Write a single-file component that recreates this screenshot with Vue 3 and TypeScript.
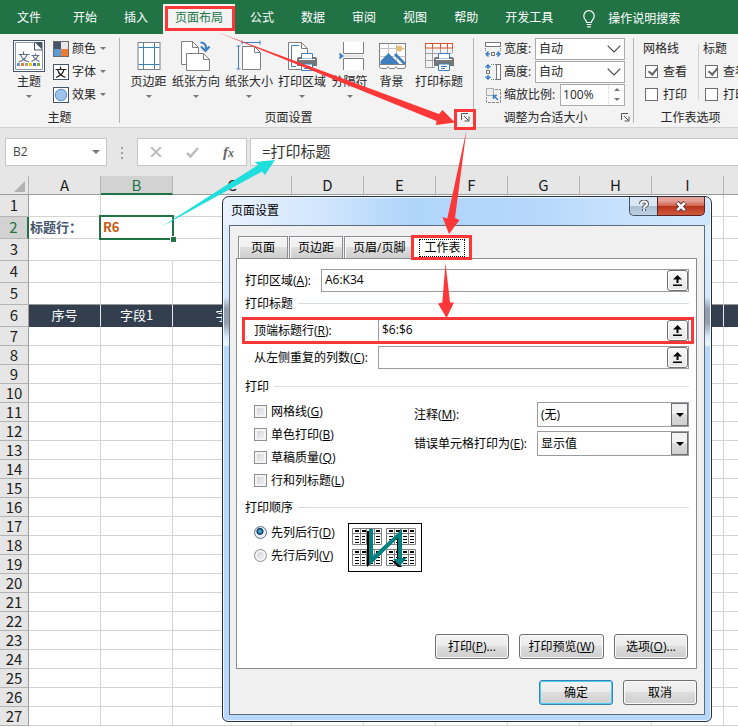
<script setup lang="ts">
import { ref } from 'vue'

interface SheetRow {
  n: number
  tall: boolean
}

const menuTabs = ['开始', '插入', '页面布局', '公式', '数据', '审阅', '视图', '帮助', '开发工具']
const activeMenu = ref('页面布局')

const columns = ['A', 'B', 'C', 'D', 'E', 'F', 'G', 'H', 'I', '']
const rows: SheetRow[] = Array.from({ length: 27 }, (_, i) => ({ n: i + 1, tall: i < 6 }))
const fieldNames: Record<string, string> = { A: '序号', B: '字段1', C: '字段2' }

const pageTools = [
  { id: 'margins', label: '页边距', menu: true },
  { id: 'orient', label: '纸张方向', menu: true },
  { id: 'size', label: '纸张大小', menu: true },
  { id: 'area', label: '打印区域', menu: true },
  { id: 'breaks', label: '分隔符', menu: true },
  { id: 'background', label: '背景', menu: false },
  { id: 'titles', label: '打印标题', menu: false },
]

const sheetOptions = ref([
  { title: '网格线', view: true, print: false },
  { title: '标题', view: true, print: false },
])

const dialogTabs = ['页面', '页边距', '页眉/页脚', '工作表']
const activeTab = ref('工作表')

const formula = ref('=打印标题')
const scaleWidth = ref('自动')
const scaleHeight = ref('自动')
const zoom = ref('100%')
const printArea = ref('A6:K34')
const titleRows = ref('$6:$6')
const titleCols = ref('')
const comments = ref('(无)')
const errorsAs = ref('显示值')
const order = ref('D')

const printFlags = ref([
  { label: '网格线', key: 'G', on: false },
  { label: '单色打印', key: 'B', on: false },
  { label: '草稿质量', key: 'Q', on: false },
  { label: '行和列标题', key: 'L', on: false },
])
const orders = [
  { label: '先列后行', key: 'D' },
  { label: '先行后列', key: 'V' },
]
const panelActions = [
  { label: '打印', key: 'P', more: true },
  { label: '打印预览', key: 'W', more: false },
  { label: '选项', key: 'O', more: true },
]
const miniPages = [[4, 5], [38, 5], [4, 26], [38, 26]]
</script>

<template>
  <div class="app">
    <nav class="menu">
      <button class="menu-tab file">文件</button>
      <button
        v-for="t in menuTabs"
        :key="t"
        class="menu-tab"
        :class="{ active: t === activeMenu }"
        @click="activeMenu = t"
      >{{ t }}</button>
      <button class="tell-me">
        <svg width="12" height="18" viewBox="0 0 12 18" fill="none" stroke="#fff" stroke-width="1.2">
          <path d="M3.7 12.5c0-2.200-2.900-3-2.900-6.600a5.200 5.200 0 0 1 10.400 0c0 3.600-2.900 4.400-2.900 6.600z" />
          <path d="M3.700 14.500h4.600M4.200 16.800h3.600" />
        </svg>
        <span>操作说明搜索</span>
      </button>
    </nav>

    <section class="ribbon">
      <div class="group theme">
        <div class="group-body">
          <button class="big">
            <svg width="32" height="32" viewBox="0 0 32 32">
              <rect x=".5" y=".5" width="31" height="31" fill="#fff" stroke="#44546a" />
              <path d="M2.500 2.500h19.500l7.500 7.500v19.500h-27z" fill="#fff" stroke="#8a98ac" />
              <path d="M21.500 2h8v8z" fill="#44546a" />
              <path d="M21.500 2.500v7.500h8" fill="#fff" stroke="#44546a" />
              <g fill="none" stroke="#60718a" stroke-width="1.100">
                <path d="M10.500 11.500v3M5.500 14.500h11M7.500 14.500c1 3.500 3.500 6 8.500 7.500M14 14.500c-1 3.500-3.500 6-8.500 7.500" />
                <path d="M22.500 13.500v2M18.500 15.500h8M20 15.500c1 3 3 4.500 6.500 6M25 15.500c-1 3-3 4.500-6.500 6" />
              </g>
              <path d="M4 23h3v3H4z" fill="#5b9bd5" /><path d="M8 23h3v3H8z" fill="#ed7d31" />
              <path d="M12 23h3v3h-3z" fill="#a5a5a5" /><path d="M16 23h3v3h-3z" fill="#ffc000" />
              <path d="M20 23h3v3h-3z" fill="#4472c4" /><path d="M24 23h3v3h-3z" fill="#70ad47" />
            </svg>
            <span>主题</span>
            <i class="caret"></i>
          </button>
          <div class="stack">
            <button class="small">
              <svg width="16" height="16" viewBox="0 0 16 16">
                <path d="M0 0h8v8H0z" fill="#44546a" /><path d="M8 0h8v8H8z" fill="#e7e6e6" />
                <path d="M0 8h8v8H0z" fill="#5b9bd5" /><path d="M8 8h8v8H8z" fill="#ed7d31" />
                <rect x=".5" y=".5" width="15" height="15" fill="none" stroke="#6c6c6c" />
              </svg>
              <span>颜色</span><i class="caret"></i>
            </button>
            <button class="small">
              <svg width="16" height="16" viewBox="0 0 16 16">
                <rect x=".5" y=".5" width="15" height="15" fill="#fff" stroke="#44546a" />
                <path d="M7.500 2.500v2.500M2.500 5.500h11M4.500 5.500c1 3.500 3.500 6.500 8 8M11 5.500c-1 3.500-3.500 6.500-8 8" fill="none" stroke="#222" stroke-width="1.200" />
              </svg>
              <span>字体</span><i class="caret"></i>
            </button>
            <button class="small">
              <svg width="16" height="16" viewBox="0 0 16 16">
                <rect x=".5" y=".5" width="15" height="15" fill="#fff" stroke="#44546a" />
                <circle cx="8" cy="8" r="5.700" fill="#9dc3ee" stroke="#5b8fcb" />
              </svg>
              <span>效果</span><i class="caret"></i>
            </button>
          </div>
        </div>
        <div class="group-foot"><span>主题</span></div>
      </div>
      <div class="divider"></div>

      <div class="group page">
        <div class="group-body tools">
          <button v-for="t in pageTools" :key="t.id" class="big">
            <svg width="32" height="32" viewBox="0 0 32 32" fill="none">
              <template v-if="t.id === 'margins'">
                <rect x="5" y="2.500" width="22" height="27" fill="#fff" stroke="#7f7f7f" />
                <path d="M10.500 3v26M21.500 3v26M5.500 7.500h21M5.500 24.500h21" stroke="#3f7fbf" />
              </template>
              <template v-else-if="t.id === 'orient'">
                <path d="M1.500 1.500h11l6 6v17h-17z" fill="#fff" stroke="#7f7f7f" />
                <path d="M12.500 1.500v6h6" stroke="#7f7f7f" />
                <path d="M6.500 13.500h17l6 6v11h-23z" fill="#fff" stroke="#7f7f7f" />
                <path d="M23.500 13.500v6h6" stroke="#7f7f7f" />
                <path d="M20.500 2.500c4 0 6 2.500 5.500 7" stroke="#3f7fbf" stroke-width="2.200" />
                <path d="M21 6.500l4.500 4.500 4-4.500" stroke="#3f7fbf" stroke-width="2.200" />
              </template>
              <template v-else-if="t.id === 'size'">
                <path d="M9 2.500h18M9 .5v4M27 .5v4M5.500 6v23M3.500 6h4M3.500 29h4" stroke="#3f7fbf" />
                <path d="M9.500 6.500h12l6 6v17h-18z" fill="#fff" stroke="#7f7f7f" />
                <path d="M21.500 6.500v6h6" stroke="#7f7f7f" />
              </template>
              <template v-else-if="t.id === 'area'">
                <path d="M2.500 2.500h13l6 6v21h-19z" fill="#fff" stroke="#7f7f7f" />
                <path d="M15.500 2.500v6h6" stroke="#7f7f7f" />
                <path d="M13 5.500H5.500v21H10" stroke="#3f7fbf" />
              </template>
              <template v-else-if="t.id === 'breaks'">
                <path d="M9.500 2v11.500h20V2M9.500 30V18.500h20V30" fill="#fff" stroke="#7f7f7f" />
                <path d="M5.500 12.500l4.500 3.500-4.500 3.500z" fill="#3f7fbf" />
                <path d="M10 16h20" stroke="#d8d8d8" />
              </template>
              <template v-else-if="t.id === 'background'">
                <rect x="3.500" y="3.500" width="26" height="21" fill="#fff" stroke="#7f7f7f" />
                <path d="M3.500 8.500h26M12.500 3.500v21M20.500 3.500v21M3.500 16.500h26" stroke="#c4c4c4" />
                <circle cx="23.500" cy="8.500" r="3" fill="#e8bd74" />
                <path d="M4.500 24v-3l8-8 11 11zM18 15l2-2 9 9v2h-2z" fill="#3f7fbf" />
                <path d="M3.500 24.500v2q0 2 2 2h5l1.500-2 1.500 2h5l1.500-2 1.500 2h6q2 0 2-2v-2z" fill="#fff" stroke="#7f7f7f" />
              </template>
              <template v-else>
                <path d="M2.500 7v20.500H12M2.500 13.500h26M2.500 20.500h10M9.500 7v20M17.500 7v6M24.500 7v6M29.500 7v6" stroke="#a0a0a0" />
                <rect x="2.500" y="3.500" width="27" height="4.500" fill="#fff" stroke="#d9542b" />
                <path d="M9.500 4v4M17.500 4v4M24.500 4v4" stroke="#d9542b" />
              </template>
              <g v-if="t.id === 'area' || t.id === 'titles'">
                <path d="M11 19q0-2 2-2h16q2 0 2 2v7H11z" fill="#777" />
                <path d="M15.500 19v-5.500h11V19z" fill="#fff" stroke="#3f7fbf" />
                <path d="M13 19.500h16" stroke="#fff" />
                <path d="M15.500 24h11v6.500h-11z" fill="#fff" stroke="#3f7fbf" />
                <path d="M18 26.500h6M18 28.500h4" stroke="#3f7fbf" />
              </g>
            </svg>
            <span>{{ t.label }}</span>
            <i v-if="t.menu" class="caret"></i>
          </button>
        </div>
        <div class="group-foot">
          <span>页面设置</span>
          <button class="launcher" aria-label="页面设置">
            <svg width="9" height="9" viewBox="0 0 9 9" fill="none" stroke="#555"><path d="M.5 7V.5H7M3 3l4.500 4.500M8 3.500v4.500H3.500" /></svg>
          </button>
        </div>
      </div>
      <div class="divider"></div>

      <div class="group scale">
        <div class="group-body stack">
          <div class="scale-row">
            <svg width="16" height="16" viewBox="0 0 16 16" fill="none">
              <rect x=".5" y="1.500" width="15" height="4" fill="#fff" stroke="#777" />
              <path d="M.5 7v3M15.500 7v3" stroke="#777" stroke-dasharray="1 1" />
              <rect x="6.500" y="11.500" width="3" height="3" stroke="#777" />
              <path d="M1 13h4M11 13h4M3.500 10.500L1 13l2.500 2.500M12.500 10.500L15 13l-2.500 2.500" stroke="#3f7fbf" stroke-width="1.500" />
            </svg>
            <label for="sw">宽度:</label>
            <div class="combo">
              <select id="sw" v-model="scaleWidth"><option>自动</option></select>
              <svg width="14" height="8" viewBox="0 0 14 8" fill="none" stroke="#444" stroke-width="1.100"><path d="M.7.7L7 7 13.300.7" /></svg>
            </div>
          </div>
          <div class="scale-row">
            <svg width="16" height="16" viewBox="0 0 16 16" fill="none">
              <rect x="11.500" y=".5" width="4" height="15" fill="#fff" stroke="#777" />
              <path d="M6 .5h5M6 15.500h5" stroke="#777" stroke-dasharray="1 1" />
              <rect x="1.500" y="6.500" width="3" height="3" stroke="#777" />
              <path d="M3 1v4M3 11v4M.5 3.500L3 1l2.500 2.500M.5 12.500L3 15l2.500-2.500" stroke="#3f7fbf" stroke-width="1.500" />
            </svg>
            <label for="sh">高度:</label>
            <div class="combo">
              <select id="sh" v-model="scaleHeight"><option>自动</option></select>
              <svg width="14" height="8" viewBox="0 0 14 8" fill="none" stroke="#444" stroke-width="1.100"><path d="M.7.7L7 7 13.300.7" /></svg>
            </div>
          </div>
          <div class="scale-row">
            <svg width="16" height="16" viewBox="0 0 16 16" fill="none">
              <rect x="1.500" y="1.500" width="7" height="7" fill="#eee" stroke="#666" stroke-dasharray="1 1" />
              <path d="M10 2.500h5.500v13H1.500V10" stroke="#888" stroke-dasharray="3 1" />
              <path d="M8.500 12V8.500H12M8.500 8.500l4.500 4.500" stroke="#3f7fbf" stroke-width="1.500" />
            </svg>
            <label for="sz">缩放比例:</label>
            <div class="spinner">
              <input id="sz" v-model="zoom" />
              <div class="spin-btns">
                <button aria-label="增大"><i class="up"></i></button>
                <button aria-label="减小"><i class="caret"></i></button>
              </div>
            </div>
          </div>
        </div>
        <div class="group-foot">
          <span>调整为合适大小</span>
          <button class="launcher" aria-label="调整为合适大小">
            <svg width="9" height="9" viewBox="0 0 9 9" fill="none" stroke="#555"><path d="M.5 7V.5H7M3 3l4.500 4.500M8 3.500v4.500H3.500" /></svg>
          </button>
        </div>
      </div>
      <div class="divider"></div>

      <div class="group options">
        <div class="group-body">
          <template v-for="(o, i) in sheetOptions" :key="o.title">
            <div v-if="i > 0" class="inner-divider"></div>
            <div class="stack">
              <span class="opt-title">{{ o.title }}</span>
              <label class="opt"><input v-model="o.view" type="checkbox" />查看</label>
              <label class="opt"><input v-model="o.print" type="checkbox" />打印</label>
            </div>
          </template>
        </div>
        <div class="group-foot"><span>工作表选项</span></div>
      </div>
    </section>

    <section class="formula-bar">
      <button class="name-box"><span>B2</span><i class="caret dark"></i></button>
      <svg class="dots" width="3" height="13" viewBox="0 0 3 13" fill="#a0a0a0"><path d="M0 1h2v2H0zM0 6h2v2H0zM0 11h2v2H0z" /></svg>
      <div class="fx-box">
        <button aria-label="取消输入"><svg width="12" height="10" viewBox="0 0 12 10" fill="none" stroke="#bdbdbd" stroke-width="2"><path d="M1 0l10 10M11 0L1 10" /></svg></button>
        <button aria-label="输入"><svg width="13" height="11" viewBox="0 0 13 11" fill="none" stroke="#bdbdbd" stroke-width="2.500"><path d="M1 6l3.500 3.500L12 1" /></svg></button>
        <button aria-label="插入函数" class="fx">f<small>x</small></button>
      </div>
      <input v-model="formula" class="formula" aria-label="编辑栏" />
    </section>

    <main class="sheet">
      <table>
        <colgroup>
          <col class="c-head" />
          <col v-for="(c, i) in columns" :key="i" :class="c === 'C' ? 'c-wide' : c ? 'c-std' : ''" />
        </colgroup>
        <thead>
          <tr>
            <th class="corner"><svg width="11" height="11" viewBox="0 0 11 11"><path d="M11 0v11H0z" fill="#b2b2b2" /></svg></th>
            <th v-for="(c, i) in columns" :key="i" :class="{ sel: c === 'B' }">{{ c }}</th>
          </tr>
        </thead>
        <tbody>
          <tr v-for="r in rows" :key="r.n" :class="{ tall: r.tall, fields: r.n === 6, before: r.n === 5 }">
            <th :class="{ sel: r.n === 2 }">{{ r.n }}</th>
            <td v-for="(c, i) in columns" :key="i" :class="{ open: c === 'B' && r.n < 4, cell: c === 'B' && r.n === 2, lead: c === 'A' && r.n === 2 }">
              <template v-if="r.n === 6">{{ fieldNames[c] }}</template>
              <template v-else-if="r.n === 2 && c === 'A'">标题行：</template>
              <template v-else-if="r.n === 2 && c === 'B'">R6<span class="selection"><i></i></span></template>
            </td>
          </tr>
        </tbody>
      </table>
    </main>

    <div class="dialog" role="dialog" aria-label="页面设置">
      <header class="title-bar">
        <span>页面设置</span>
        <div class="win-btns">
          <button class="help" aria-label="帮助">
            <svg width="10" height="12" viewBox="0 0 10 12" fill="none"><g stroke="#4a5262" stroke-width="4"><path d="M2 4q0-2.500 3-2.500T8 4q0 1.300-1.500 2T5 8" /><path d="M5 9v2" /></g><g stroke="#fff" stroke-width="2"><path d="M2 4q0-2.500 3-2.500T8 4q0 1.300-1.500 2T5 8" /><path d="M5 9.200v1.800" /></g></svg>
          </button>
          <button class="close" aria-label="关闭">
            <svg width="12" height="11" viewBox="0 0 12 11" fill="none"><path d="M2 1.500l8 8M10 1.500l-8 8" stroke="#5a3a3e" stroke-width="4.500" /><path d="M2.300 1.800l7.400 7.400M9.700 1.800L2.300 9.200" stroke="#fff" stroke-width="2.600" /></svg>
          </button>
        </div>
      </header>
      <div class="dialog-body">
        <div class="tabs" role="tablist">
          <button
            v-for="t in dialogTabs"
            :key="t"
            role="tab"
            class="tab"
            :class="{ current: t === activeTab }"
            @click="activeTab = t"
          ><span>{{ t }}</span></button>
        </div>
        <div class="panel">
          <div class="field area-row">
            <label for="pa">打印区域(<u>A</u>):</label>
            <div class="ref-box">
              <input id="pa" v-model="printArea" />
              <button aria-label="选择区域"><svg width="9" height="11" viewBox="0 0 9 11"><path d="M4.500 0L9 4.500H5.500V8h-2V4.500H0zM0 9.500h9V11H0z" /></svg></button>
            </div>
          </div>

          <section>
            <h3>打印标题</h3>
            <div class="titles-body">
              <div class="field title-row">
                <label for="tr">顶端标题行(<u>R</u>):</label>
                <div class="ref-box">
                  <input id="tr" v-model="titleRows" />
                  <button aria-label="选择标题行"><svg width="9" height="11" viewBox="0 0 9 11"><path d="M4.500 0L9 4.500H5.500V8h-2V4.500H0zM0 9.500h9V11H0z" /></svg></button>
                </div>
              </div>
              <div class="field title-row">
                <label for="tc">从左侧重复的列数(<u>C</u>):</label>
                <div class="ref-box">
                  <input id="tc" v-model="titleCols" />
                  <button aria-label="选择标题列"><svg width="9" height="11" viewBox="0 0 9 11"><path d="M4.500 0L9 4.500H5.500V8h-2V4.500H0zM0 9.500h9V11H0z" /></svg></button>
                </div>
              </div>
            </div>
          </section>

          <section class="print">
            <h3>打印</h3>
            <div class="print-body">
              <div class="choices">
                <label v-for="f in printFlags" :key="f.key" class="choice">
                  <input v-model="f.on" type="checkbox" /><span>{{ f.label }}(<u>{{ f.key }}</u>)</span>
                </label>
              </div>
              <div class="selects">
                <label for="cm">注释(<u>M</u>):</label>
                <div class="drop">
                  <select id="cm" v-model="comments"><option>(无)</option></select>
                  <span class="drop-btn"><i></i></span>
                </div>
                <label for="er">错误单元格打印为(<u>E</u>):</label>
                <div class="drop">
                  <select id="er" v-model="errorsAs"><option>显示值</option></select>
                  <span class="drop-btn"><i></i></span>
                </div>
              </div>
            </div>
          </section>

          <section class="order">
            <h3>打印顺序</h3>
            <div class="print-body">
              <div class="choices">
                <label v-for="o in orders" :key="o.key" class="choice">
                  <input v-model="order" type="radio" name="order" :value="o.key" /><span>{{ o.label }}(<u>{{ o.key }}</u>)</span>
                </label>
              </div>
              <svg class="preview" width="74" height="49" viewBox="0 0 74 49" fill="none">
                <rect x=".5" y=".5" width="73" height="48" fill="#fff" stroke="#000" />
                <g v-for="([x, y], i) in miniPages" :key="i" :transform="`translate(${x} ${y})`">
                  <path d="M.5.5h29v16H.5zM.5 5.500h29M8.500.5v16M14.500.5v16M22.500.5v16" stroke="#808080" />
                  <path d="M3 3h4M10 3h4M17 3h4M24 3h4" stroke="#000" stroke-width="2" />
                  <path d="M3 8.500h4M3 11.500h4M3 14.500h4M10 8.500h3M10 11.500h3M10 14.500h3M17 8.500h4M17 11.500h4M17 14.500h4M24 8.500h4M24 11.500h4M24 14.500h4" stroke="#000" />
                </g>
                <path d="M19 8h3v33l-3 3zM49 13h3v27h-3zM44 38h5l5 6h-4z" fill="#000" />
                <path d="M21 6h4v27L54 6v29h4.500L52 43l-7-7h5V15L22 42h-1z" fill="#008080" />
              </svg>
            </div>
          </section>

          <div class="actions">
            <button v-for="a in panelActions" :key="a.key" class="btn" :class="{ wide: !a.more }">
              {{ a.label }}(<u>{{ a.key }}</u>)<template v-if="a.more">...</template>
            </button>
          </div>
        </div>
        <footer class="dialog-foot">
          <button class="btn primary">确定</button>
          <button class="btn">取消</button>
        </footer>
      </div>
    </div>

    <svg class="notes" width="738" height="727" viewBox="0 0 738 727" fill="none">
      <path d="M161 227L258 165l-3-3 20-2-10 15-3-3.500z" fill="#1fdede" />
      <g stroke="#fc3737" stroke-width="3">
        <rect x="166.500" y="7.500" width="67" height="22" />
        <rect x="455.500" y="110.500" width="19" height="18" />
        <rect x="412.500" y="236.500" width="58" height="22" />
        <rect x="243.500" y="318.500" width="449" height="24" />
      </g>
      <g fill="#fc3737">
        <path d="M217 32l222 82 3.500-4 12.500 12.500-19 2.500.5-4z" />
        <path d="M466.500 130L455 218l4.500 2-10.500 14-6.500-17 4.800 1.500z" />
        <path d="M445.500 263l4.500 39.500h4L446.500 318 438 303.500l4.300-1z" />
      </g>
    </svg>
  </div>
</template>

<style>
body {
  margin: 0;
}
</style>

<style scoped>
.app {
  position: relative;
  display: flex;
  flex-direction: column;
  height: 100vh;
  overflow: hidden;
  background: #e6e6e6;
  font: 12px/16px "Open Sans", "Noto Sans CJK SC", sans-serif;
  color: #262626;
}
.app * {
  box-sizing: border-box;
}
button,
input,
select {
  margin: 0;
  padding: 0;
  border: 0;
  background: none;
  font: inherit;
  color: inherit;
  appearance: none;
  outline: none;
  border-radius: 0;
}
svg {
  display: block;
  flex: none;
}
.caret {
  width: 0;
  height: 0;
  border: 3px solid transparent;
  border-top-color: #777;
  border-bottom: 0;
}
.up {
  width: 0;
  height: 0;
  border: 3px solid transparent;
  border-bottom-color: #777;
  border-top: 0;
}

/* menu strip */
.menu {
  display: flex;
  flex: none;
  gap: 3px;
  height: 34px;
  padding: 4px 0 0 5px;
  background: #217346;
  color: #fff;
  white-space: nowrap;
}
.menu-tab {
  flex: none;
  padding: 0 12px 2px;
}
.menu-tab.file {
  margin-right: 5px;
}
.menu-tab.active {
  background: #f3f3f3;
  color: #217346;
}
.tell-me {
  display: flex;
  align-items: center;
  gap: 13px;
  margin-left: 15px;
}

/* ribbon */
.ribbon {
  display: flex;
  flex: none;
  overflow: hidden;
  background: #f3f3f3;
  border-bottom: 1px solid #d2d2d2;
  white-space: nowrap;
}
.divider {
  flex: none;
  width: 1px;
  margin: 4px 0;
  background: #b4b4b4;
}
.group {
  flex: none;
  padding-top: 3px;
}
.group-body {
  display: flex;
  height: 69px;
}
.theme .group-body {
  gap: 8px;
  padding: 0 13px;
}
.page .group-body {
  gap: 5px;
  padding: 0 10px;
}
.scale .group-body {
  padding: 0 8px 0 11px;
}
.options .group-body {
  padding: 0 0 0 9px;
}
.group-foot {
  display: flex;
  height: 21px;
  line-height: 23px;
}
.group-foot span {
  flex: 1;
  text-align: center;
}
.launcher {
  display: flex;
  align-items: center;
  justify-content: center;
  width: 16px;
  padding-top: 2px;
}
.big {
  display: flex;
  flex-direction: column;
  align-items: center;
  gap: 2px;
  padding-top: 3px;
}
.tools .big {
  min-width: 37px;
}
.big .caret {
  margin-top: 3px;
}
.stack {
  display: flex;
  flex-direction: column;
}
.small {
  display: flex;
  align-items: center;
  height: 23px;
}
.small span {
  padding: 0 4px 0 3px;
}
.scale-row {
  display: flex;
  align-items: center;
  gap: 3px;
  width: 140px;
  height: 23px;
}
.combo {
  display: flex;
  align-items: center;
  width: 90px;
  height: 22px;
  margin-left: auto;
  padding-right: 3px;
  border: 1px solid #ababab;
  background: #fff;
}
.combo select {
  flex: 1;
  min-width: 0;
  padding-left: 3px;
}
.spinner {
  display: flex;
  width: 65px;
  height: 22px;
  margin-left: auto;
  border: 1px solid #ababab;
  background: #fff;
}
.spinner input {
  flex: 1;
  min-width: 0;
  padding-left: 2px;
}
.spin-btns {
  display: flex;
  flex-direction: column;
  width: 16px;
  border-left: 1px solid #e6e6e6;
}
.spin-btns button {
  display: flex;
  flex: 1;
  align-items: center;
  justify-content: center;
}
.opt-title {
  line-height: 23px;
}
.opt {
  display: flex;
  align-items: center;
  gap: 5px;
  height: 23px;
  padding-left: 2px;
}
.opt input {
  width: 13px;
  height: 13px;
  border: 1px solid #6e6e6e;
  background: #fff;
}
.opt input:checked::after {
  content: "";
  display: block;
  width: 4px;
  height: 7px;
  margin: 0 0 0 4px;
  border: solid #666;
  border-width: 0 2px 2px 0;
  transform: rotate(40deg);
}
.inner-divider {
  width: 1px;
  margin: 7px 4px 7px 11px;
  background: #d0d0d0;
}

/* formula bar */
.formula-bar {
  display: flex;
  flex: none;
  height: 48px;
  padding: 10px 0 10px 5px;
}
.name-box {
  display: flex;
  align-items: center;
  justify-content: space-between;
  width: 102px;
  padding: 0 6px 0 7px;
  border: 1px solid #c6c6c6;
  background: #fff;
  color: #444;
}
.caret.dark {
  border-width: 4px 4px 0;
}
.dots {
  align-self: center;
  margin: 0 13px 0 14px;
}
.fx-box {
  display: flex;
  align-items: center;
  justify-content: space-around;
  width: 110px;
  border: 1px solid #c6c6c6;
  background: #fff;
}
.fx {
  font: italic 15px/20px "Liberation Serif", serif;
  font-weight: bold;
  color: #666;
}
.fx small {
  font-size: 12px;
}
.formula {
  flex: 1;
  min-width: 0;
  margin-left: 3px;
  padding: 0 11px 2px;
  border: 1px solid #c6c6c6;
  border-right: 0;
  background: #fff;
  font-size: 15px;
  color: #333;
}

/* sheet */
.sheet {
  flex: 1;
  min-height: 0;
  overflow: hidden;
  background: #fff;
}
table {
  width: 100%;
  table-layout: fixed;
  border-collapse: separate;
  border-spacing: 0;
  font: 15px/18px "Noto Sans CJK SC", sans-serif;
}
.c-head {
  width: 29px;
}
.c-std {
  width: 72px;
}
.c-wide {
  width: 119px;
}
th,
td {
  padding: 0;
  height: 19px;
  white-space: nowrap;
}
th {
  background: #e6e6e6;
  font-weight: normal;
  color: #1e1e1e;
}
thead th {
  border-right: 1px solid #b4b4b4;
  border-bottom: 1px solid #9b9b9b;
}
thead th:last-child {
  border-right: 0;
}
thead th.sel {
  border-bottom: 2px solid #217346;
  background: #d2d2d2;
  color: #217346;
  line-height: 17px;
}
.corner svg {
  margin: 2px 0 0 14px;
}
tbody th {
  border-right: 1px solid #9b9b9b;
  border-bottom: 1px solid #b4b4b4;
}
tbody th.sel {
  border-right: 2px solid #217346;
  background: #d2d2d2;
  color: #217346;
}
td {
  border-right: 1px solid #d4d4d4;
  border-bottom: 1px solid #d4d4d4;
}
td:last-child {
  border-right: 0;
}
.tall th,
.tall td {
  height: 22px;
  padding-bottom: 2px;
}
.tall td {
  font-size: 13px;
}
.before td {
  border-bottom-color: #999;
}
td.open {
  border-right-color: #fff;
}
.lead {
  padding-left: 1px;
  font-weight: bold;
  color: #44546a;
}
.cell {
  position: relative;
  padding-left: 2px;
  font-weight: bold;
  color: #c55a11;
}
.selection {
  position: absolute;
  inset: -2px;
  border: 2px solid #217346;
}
.selection i {
  position: absolute;
  right: -4px;
  bottom: -4px;
  width: 6px;
  height: 6px;
  border: solid #fff;
  border-width: 1px 0 0 1px;
  background: #217346;
}
.fields td {
  border-right-color: #e8e8e8;
  border-bottom-color: #333f4f;
  background: #333f4f;
  color: #fff;
  text-align: center;
}

/* page setup dialog */
.dialog {
  position: absolute;
  left: 222px;
  top: 196px;
  width: 490px;
  padding: 0 6px 6px;
  border: 1px solid #26303c;
  border-radius: 7px 7px 6px 6px;
  background:
    linear-gradient(90deg, #e9f3fe 0, #cfe4fc 22%, #b0d5fb 38%, #b4d7fb 62%, #cde4fd 88%, #cfe6fe) 0 0 / 100% 28px no-repeat,
    linear-gradient(#e2f0fe 0, #d4e8fd 100px, #939fac 112px, #939fac 126px, #dcecfd 140px, #eaf4fe 148px, #b7d8fb 150px);
  box-shadow: inset 0 0 0 1px #eef7ff;
  color: #000;
}
.title-bar {
  display: flex;
  justify-content: space-between;
  height: 28px;
  padding-left: 2px;
  line-height: 27px;
}
.win-btns {
  display: flex;
  height: 19px;
}
.win-btns button {
  display: flex;
  align-items: center;
  justify-content: center;
  border: 1px solid #45566b;
  border-top: 0;
}
.win-btns .help {
  width: 28px;
  border-right: 0;
  border-radius: 0 0 0 5px;
  background: linear-gradient(#d9e6f3 0 48%, #a9bdd2 50%, #bfd2e6);
}
.win-btns .close {
  width: 48px;
  border-color: #5b2226;
  border-radius: 0 0 5px 0;
  background: linear-gradient(#e5a197 0 20%, #d0644f 48%, #b8321c 50%, #cf5a3d);
}
.dialog-body {
  padding: 9px 7px 9px 6px;
  border: 1px solid #5d6b7c;
  background: #f0f0f0;
}
.tabs {
  display: flex;
  align-items: flex-end;
  height: 23px;
  padding-left: 2px;
}
.tab {
  height: 22px;
  padding: 0 12px;
  border: 1px solid #8b8c92;
  border-bottom: 0;
  box-shadow: inset 1px 1px 0 #fff;
  background: linear-gradient(#f2f2f2 0 45%, #dedede 48%, #cfcfcf);
}
.tab:nth-child(n + 2) {
  margin-left: 1px;
  padding: 0 8px;
}
.tab.current:nth-child(n) {
  height: 24px;
  margin: 0 0 -1px -1px;
  padding: 0 5px;
  background: #fff;
}
.tab.current span {
  display: block;
  margin: 2px 0;
  padding: 0 4px;
  border: 1px dotted #000;
}
.panel {
  padding: 10px 7px 9px 8px;
  border: 1px solid #8b8c92;
  background: #fff;
}
.field {
  display: grid;
  align-items: center;
  height: 23px;
}
.area-row {
  grid-template-columns: 76px 1fr;
}
.title-row {
  grid-template-columns: 124px 1fr;
  padding-left: 9px;
}
.titles-body {
  display: flex;
  flex-direction: column;
  gap: 4px;
  padding-top: 4px;
}
.ref-box {
  display: flex;
  height: 23px;
  border: 1px solid #9b9ca2;
  background: #fff;
}
.ref-box input {
  flex: 1;
  min-width: 0;
  padding: 0 3px 2px;
}
.ref-box button {
  display: flex;
  align-items: center;
  justify-content: center;
  width: 21px;
  border: 1px solid #707070;
  border-radius: 3px;
  background: linear-gradient(#fbfbfb, #e4e4e4);
  box-shadow: inset 0 0 0 1px #fff;
}
h3 {
  display: flex;
  align-items: center;
  gap: 5px;
  height: 23px;
  margin: 0;
  font: inherit;
}
h3::after {
  content: "";
  flex: 1;
  height: 1px;
  background: #d5dfe5;
}
.print {
  padding-top: 6px;
}
.order {
  padding-top: 4px;
}
.print-body {
  display: flex;
  padding: 2px 0 0 9px;
}
.choices {
  flex: none;
  width: 94px;
}
.print .choices {
  width: 160px;
}
.choice {
  display: flex;
  align-items: center;
  gap: 4px;
  height: 23px;
  white-space: nowrap;
}
.choice input {
  flex: none;
  width: 13px;
  height: 13px;
  border: 1px solid #8e8f8f;
  background: linear-gradient(135deg, #cbcfd5, #f6f6f6);
  box-shadow: inset 0 0 0 2px #f4f4f4;
}
.choice input[type="radio"] {
  border-radius: 50%;
}
.choice input[type="radio"]:checked {
  border-color: #5f6f80;
  background: radial-gradient(circle at 45% 40%, #7fd0f4 0, #1c6ea5 2px, #0b2f52 3px, #e8eef3 4px);
  box-shadow: none;
}
.selects {
  display: grid;
  flex: 1;
  grid-template-columns: 1fr 152px;
  gap: 4px 0;
  align-content: start;
  align-items: center;
  padding-top: 2px;
  white-space: nowrap;
}
.drop {
  display: flex;
  height: 25px;
  border: 1px solid #9b9ca2;
  background: #fff;
}
.drop select {
  flex: 1;
  min-width: 0;
  padding-left: 3px;
}
.drop-btn {
  display: flex;
  align-items: center;
  justify-content: center;
  width: 17px;
  border: 1px solid #707070;
  background: linear-gradient(#f3f3f3 0 48%, #dddddd 50%, #cfcfcf);
  pointer-events: none;
}
.drop-btn i {
  border: 4px solid transparent;
  border-top-color: #000;
  border-bottom: 0;
}
.preview {
  margin-top: 2px;
}
.actions,
.dialog-foot {
  display: flex;
  justify-content: flex-end;
  gap: 10px;
}
.actions {
  padding: 62px 1px 0 0;
}
.dialog-foot {
  padding-top: 11px;
}
.btn {
  min-width: 74px;
  height: 25px;
  border: 1px solid #707070;
  border-radius: 3px;
  background: linear-gradient(#f3f3f3 0, #ebebeb 48%, #dddddd 50%, #cfcfcf);
  box-shadow: inset 0 0 0 1px #fafafa;
}
.btn.wide {
  min-width: 85px;
}
.btn.primary {
  border-color: #3c7fb1;
  box-shadow: inset 0 0 0 1px #48d0f8;
}

/* callout arrows and frames above everything else */
.notes {
  position: absolute;
  left: 0;
  top: 0;
  pointer-events: none;
}
</style>
